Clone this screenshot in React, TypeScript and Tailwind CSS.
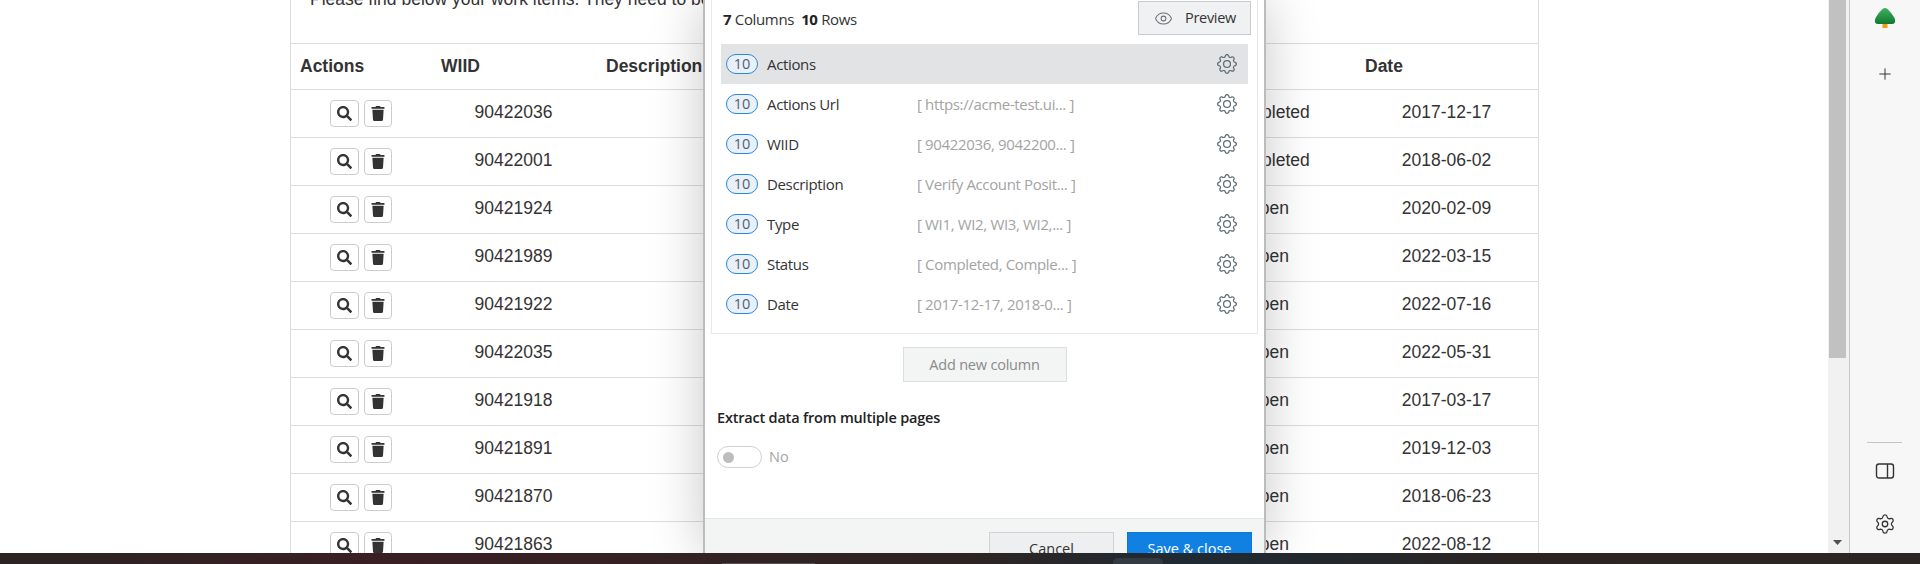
import React from "react";
import { FaSearch, FaTrash } from "react-icons/fa";
import { BsGear } from "react-icons/bs";
import { Settings, Plus, Eye } from "lucide-react";

const rows = [
  ["90422036", "Completed", "2017-12-17"],
  ["90422001", "Completed", "2018-06-02"],
  ["90421924", "Open", "2020-02-09"],
  ["90421989", "Open", "2022-03-15"],
  ["90421922", "Open", "2022-07-16"],
  ["90422035", "Open", "2022-05-31"],
  ["90421918", "Open", "2017-03-17"],
  ["90421891", "Open", "2019-12-03"],
  ["90421870", "Open", "2018-06-23"],
  ["90421863", "Open", "2022-08-12"],
];

const cols = [
  ["Actions", null],
  ["Actions Url", "[ https://acme-test.ui... ]"],
  ["WIID", "[ 90422036, 9042200... ]"],
  ["Description", "[ Verify Account Posit... ]"],
  ["Type", "[ WI1, WI2, WI3, WI2,... ]"],
  ["Status", "[ Completed, Comple... ]"],
  ["Date", "[ 2017-12-17, 2018-0... ]"],
];

const gridCols = "grid grid-cols-[140px_165px_416px_165px_178px_183px]";

function IconBtn({ children, wide }: { children: React.ReactNode; wide?: boolean }) {
  return (
    <span className={`flex h-[27px] items-center justify-center rounded-[4px] border border-[#cccccc] bg-white text-[#333333] ${wide ? "w-[29px]" : "w-[28px]"}`}>
      {children}
    </span>
  );
}

function Table() {
  return (
    <div className="ml-[290px] h-full w-[1249px] overflow-hidden border-x border-[#dddddd] bg-white font-['Liberation_Sans',sans-serif] text-[17.5px] text-[#333333]">
      <div className="h-[43px] overflow-hidden">
        <p className="-mt-[13px] pl-[19px] leading-[24px]">Please find below your work items. They need to be</p>
      </div>
      <div className={`${gridCols} h-[47px] items-center border-y border-[#dddddd] font-bold`}>
        <span className="pl-[9px]">Actions</span>
        <span className="pl-[10px]">WIID</span>
        <span className="pl-[10px]">Description</span>
        <span />
        <span />
        <span className="pl-[10px]">Date</span>
      </div>
      {rows.map((r) => (
        <div key={r[0]} className={`${gridCols} h-[48px] items-center border-b border-[#dddddd] text-center`}>
          <span className="flex justify-center gap-[5px]">
            <IconBtn wide><FaSearch className="h-[15px] w-[15px]" /></IconBtn>
            <IconBtn><FaTrash className="h-[15px] w-[14px]" /></IconBtn>
          </span>
          <span className="-mt-[3px]">{r[0]}</span>
          <span />
          <span />
          <span className="-mt-[3px] pl-[3px]">{r[1]}</span>
          <span className="-mt-[3px]">{r[2]}</span>
        </div>
      ))}
    </div>
  );
}

function Modal() {
  return (
    <div className="absolute left-[703px] top-0 flex h-full w-[563px] flex-col border-x-2 border-[#bcbcbc] bg-white font-['Open_Sans',sans-serif] text-[14.5px] text-[#333333] shadow-[0_0_50px_rgba(0,0,0,0.22)]">
      <div className="mx-[6px] h-[334px] shrink-0 border-x border-b border-[#e6e8e9]">
        <div className="flex h-[36px] items-start justify-between pl-[11px] pr-[6px] pt-px">
          <span className="mt-[6px] text-[15px] leading-[24px] tracking-[-0.35px]">
            <b className="font-bold text-[#222222]">7</b> Columns&nbsp;&nbsp;<b className="font-bold text-[#222222]">10</b> Rows
          </span>
          <span className="flex h-[34px] w-[113px] items-center gap-[12px] border border-[#c8cacc] bg-[#f0f1f3] pl-[15px] tracking-[-0.3px]">
            <Eye className="h-[19px] w-[19px] text-[#6b7076]" strokeWidth={1.3} />
            Preview
          </span>
        </div>
        <div className="mx-[9px] mt-[8px]">
          {cols.map(([name, value], i) => (
            <div key={name} className={`flex h-[40px] items-center pl-[5px] pr-[11px] ${i === 0 ? "bg-[#e1e3e5]" : ""}`}>
              <span className="flex h-[20px] w-[32px] items-center justify-center rounded-full border border-[#2b88d8] bg-[#e8f1fb] text-[#555f68]">10</span>
              <span className="ml-[9px] w-[150px] text-[15px] tracking-[-0.35px]">{name}</span>
              <span className="flex-1 text-[15px] tracking-[-0.35px] text-[#a3a3a3]">{value}</span>
              <BsGear className="h-[20px] w-[20px] text-[#5f6b76]" />
            </div>
          ))}
        </div>
      </div>
      <div className="mt-[13px] flex shrink-0 justify-center">
        <span className="flex h-[35px] w-[164px] items-center justify-center border border-[#dcdfe0] bg-[#f3f5f5] tracking-[-0.2px] text-[#8a8a8a]">Add new column</span>
      </div>
      <h3 className="ml-[12px] mt-[26px] shrink-0 text-[14.5px] font-semibold leading-[20px] tracking-[-0.2px] text-[#222222]">Extract data from multiple pages</h3>
      <div className="ml-[12px] mt-[18px] flex shrink-0 items-center gap-[7px]">
        <span className="flex h-[22px] w-[45px] items-center rounded-full border-[1.5px] border-[#d0d0d0] pl-[4.5px]">
          <span className="h-[11px] w-[11px] rounded-full bg-[#bdbdbd]" />
        </span>
        <span className="text-[#a3a3a3]">No</span>
      </div>
      <div className="mt-[50px] flex h-[60px] shrink-0 justify-end gap-[13px] border-t border-[#e4e6e7] bg-[#f3f5f5] pr-[12px] pt-[13px]">
        <span className="flex h-[40px] w-[125px] items-center justify-center border border-[#d0d2d4] bg-[#eeeff1] pb-[6px]">Cancel</span>
        <span className="flex h-[40px] w-[125px] items-center justify-center border border-[#0b76d8] bg-[#1081e3] pb-[6px] text-white">Save &amp; close</span>
      </div>
    </div>
  );
}

function Sidebar() {
  return (
    <div className="flex h-full w-[71px] flex-col items-center border-l border-[#c8c8c8] bg-[#f7f7f7] pr-px">
      <svg className="mt-[7px] h-[22px] w-[22px] shrink-0" viewBox="0 0 22 22">
        <defs>
          <linearGradient id="tree" x1="0" y1="0" x2="0" y2="1">
            <stop offset="0" stopColor="#3fb05f" />
            <stop offset="1" stopColor="#0e7a2e" />
          </linearGradient>
        </defs>
        <rect x="8.5" y="16" width="5" height="5" fill="#f39c12" />
        <path d="M8.5 2 Q11 0 13.5 2 Q17 5 20.5 11 Q22.5 16.5 18 17 L4 17 Q-0.5 16.5 1.5 11 Q5 5 8.5 2 Z" fill="url(#tree)" />
      </svg>
      <Plus className="mt-[36px] h-[18px] w-[18px] shrink-0 text-[#222222]" strokeWidth={1.2} />
      <div className="mt-[359px] h-px w-[35px] shrink-0 bg-[#c4c4c4]" />
      <svg className="mt-[18px] h-[20px] w-[20px] shrink-0 text-[#333333]" viewBox="0 0 20 20" fill="none" stroke="currentColor" strokeWidth="1.4">
        <rect x="1.5" y="3" width="17" height="14" rx="2.5" />
        <path d="M12.5 3v14" />
      </svg>
      <Settings className="mt-[32px] h-[22px] w-[22px] shrink-0 text-[#333333]" strokeWidth={1.4} />
    </div>
  );
}

function Scrollbar() {
  return (
    <div className="flex h-full w-[21px] flex-col items-center bg-[#f1f1f1] pr-[3px]">
      <div className="h-[358px] w-[17px] bg-[#c1c1c1]" />
      <svg className="mt-[182px] h-[5px] w-[9px]" viewBox="0 0 9 5"><path d="M0 0h9L4.5 5z" fill="#505050" /></svg>
    </div>
  );
}

export default function App() {
  return (
    <div className="flex h-[564px] w-[1920px] flex-col overflow-hidden bg-white">
      <div className="flex h-[553px]">
        <div className="relative h-full w-[1829px] overflow-hidden">
          <Table />
          <Modal />
        </div>
        <Scrollbar />
        <Sidebar />
      </div>
      <div className="relative h-[11px] bg-[linear-gradient(90deg,#2b2324_0%,#3a1f24_20%,#2e2423_50%,#1f2a33_62%,#2b2422_80%,#2b2624_100%)]">
        <div className="absolute bottom-0 left-[722px] h-px w-[93px] bg-[#55504f]" />
        <div className="absolute bottom-0 left-[1113px] h-[6px] w-[50px] rounded-t-[5px] bg-[#343a42]" />
      </div>
    </div>
  );
}
